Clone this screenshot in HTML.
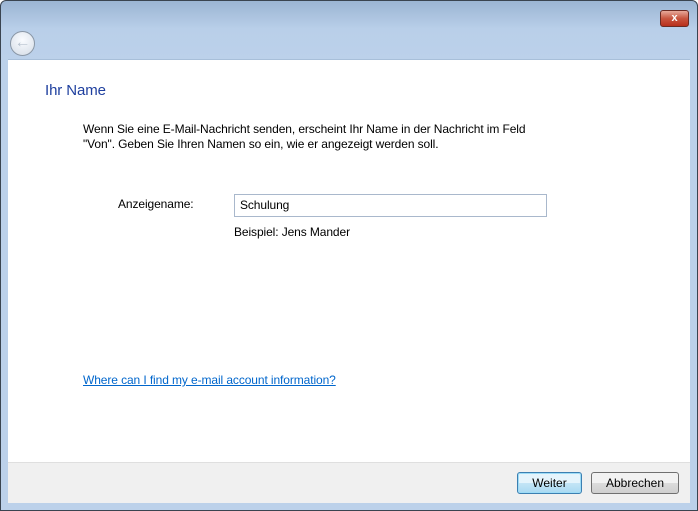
<!DOCTYPE html>
<html><head><meta charset="utf-8"><style>
body{margin:0;width:698px;height:511px;overflow:hidden;font-family:"Liberation Sans",sans-serif;font-size:12px;}
.win{position:absolute;left:0;top:0;width:696px;height:509px;border:1px solid #3a4450;border-radius:6px 6px 0 0;background:linear-gradient(#9bb5d3 0,#b9cfe9 28px,#bcd1ea 60px);}
.content{position:absolute;left:8px;top:59px;width:682px;height:403px;background:#fff;border-top:1px solid #a8bfd9;}
.footer{position:absolute;left:8px;top:462px;width:682px;height:40px;background:#f0f0f0;border-top:1px solid #dfdfdf;}
.close{position:absolute;left:659px;top:9px;width:27px;height:15px;border:1px solid #6b2a22;border-radius:3px;background:linear-gradient(#e7a99a,#c8553f 50%,#b8301c);color:#fff;font-weight:bold;font-size:11px;text-align:center;line-height:15px;}
.back{position:absolute;left:9px;top:30px;width:23px;height:23px;border-radius:50%;border:1px solid #8a97a6;background:radial-gradient(circle at 50% 35%,#fafcff,#d4dce6);color:#b8c3cf;text-align:center;line-height:22px;font-size:16px;font-weight:bold;}
.t{position:absolute;white-space:nowrap;color:#000;letter-spacing:-0.1px;}
.btn{position:absolute;top:472px;height:20px;border:1px solid #707070;border-radius:3px;background:linear-gradient(#f2f2f2 50%,#dcdcdc 50%,#cfcfcf);text-align:center;line-height:20px;}
</style></head><body>
<div class="win">
<div class="close">x</div>
<div class="back">&#8592;</div>
</div>
<div class="content"></div>
<div class="footer"></div>
<div class="t" style="left:45px;top:82px;font-size:15px;color:#1e3f9e;">Ihr Name</div>
<div class="t" style="left:83px;top:122px;">Wenn Sie eine E-Mail-Nachricht senden, erscheint Ihr Name in der Nachricht im Feld</div>
<div class="t" style="left:83px;top:137px;">"Von". Geben Sie Ihren Namen so ein, wie er angezeigt werden soll.</div>
<div class="t" style="left:118px;top:197px;">Anzeigename:</div>
<div style="position:absolute;left:234px;top:194px;width:311px;height:21px;border:1px solid #a9b8cc;"></div>
<div class="t" style="left:240px;top:198px;">Schulung</div>
<div class="t" style="left:234px;top:225px;">Beispiel: Jens Mander</div>
<div class="t" style="left:83px;top:373px;color:#0066cc;text-decoration:underline;">Where can I find my e-mail account information?</div>
<div class="btn" style="left:517px;width:63px;border-color:#3c7fb1;background:linear-gradient(#e5f4fc 50%,#c4e5f6 50%,#a9d9f2);box-shadow:0 0 0 1px #9ddcf7 inset;">Weiter</div>
<div class="btn" style="left:591px;width:86px;">Abbrechen</div>
</body></html>
